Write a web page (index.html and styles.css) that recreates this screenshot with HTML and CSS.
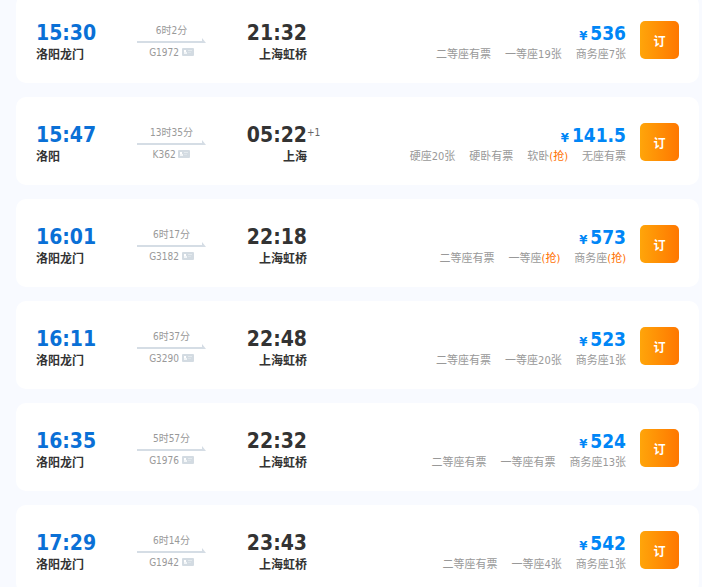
FILE: index.html
```
<!DOCTYPE html>
<html lang="zh-CN">
<head>
  <meta charset="UTF-8" />
  <title>洛阳 - 上海 火车票</title>
  <meta name="viewport" content="width=device-width, initial-scale=1.0" />
  <link rel="stylesheet" href="styles.css">
</head>
<body>

<!-- ID card icon and arrow, shared by all rows -->
<svg class="sprite" width="0" height="0" aria-hidden="true">
  <symbol id="id-card" viewBox="0 0 12 8">
    <rect width="12" height="8" rx="1" fill="#d3dbe2" />
    <rect x="2" y="2" width="2" height="2" fill="#fff" />
    <rect x="2" y="4" width="3" height="2" fill="#f3f6f8" />
    <rect x="6" y="2" width="4" height="1" fill="#e4eaee" />
    <rect x="6" y="4" width="3" height="1" fill="#dde4e9" />
  </symbol>
  <symbol id="arrow" viewBox="0 0 69 5">
    <path d="M0 3H65V0L69 5H0Z" fill="#d5dde5" />
  </symbol>
</svg>

<div class="train-list">
  <div class="train">
    <div class="from">
      <div class="time">15:30</div>
      <div class="station">洛阳龙门</div>
    </div>
    <div class="route">
      <div class="duration">6时2分</div>
      <svg class="arrow"><use href="#arrow" /></svg>
      <div class="number">G1972 <svg class="card-icon"><use href="#id-card" /></svg></div>
    </div>
    <div class="to">
      <div class="time">21:32</div>
      <div class="station">上海虹桥</div>
    </div>
    <div class="info">
      <div class="price"><span class="yen">¥</span>536</div>
      <div class="seats"><span>二等座有票</span><span>一等座19张</span><span>商务座7张</span></div>
    </div>
    <button class="book">订</button>
  </div>

  <div class="train">
    <div class="from">
      <div class="time">15:47</div>
      <div class="station">洛阳</div>
    </div>
    <div class="route">
      <div class="duration">13时35分</div>
      <svg class="arrow"><use href="#arrow" /></svg>
      <div class="number">K362 <svg class="card-icon"><use href="#id-card" /></svg></div>
    </div>
    <div class="to">
      <div class="time">05:22<span class="next-day">+1</span></div>
      <div class="station">上海</div>
    </div>
    <div class="info">
      <div class="price"><span class="yen">¥</span>141.5</div>
      <div class="seats"><span>硬座20张</span><span>硬卧有票</span><span>软卧<em>(抢)</em></span><span>无座有票</span></div>
    </div>
    <button class="book">订</button>
  </div>

  <div class="train">
    <div class="from">
      <div class="time">16:01</div>
      <div class="station">洛阳龙门</div>
    </div>
    <div class="route">
      <div class="duration">6时17分</div>
      <svg class="arrow"><use href="#arrow" /></svg>
      <div class="number">G3182 <svg class="card-icon"><use href="#id-card" /></svg></div>
    </div>
    <div class="to">
      <div class="time">22:18</div>
      <div class="station">上海虹桥</div>
    </div>
    <div class="info">
      <div class="price"><span class="yen">¥</span>573</div>
      <div class="seats"><span>二等座有票</span><span>一等座<em>(抢)</em></span><span>商务座<em>(抢)</em></span></div>
    </div>
    <button class="book">订</button>
  </div>

  <div class="train">
    <div class="from">
      <div class="time">16:11</div>
      <div class="station">洛阳龙门</div>
    </div>
    <div class="route">
      <div class="duration">6时37分</div>
      <svg class="arrow"><use href="#arrow" /></svg>
      <div class="number">G3290 <svg class="card-icon"><use href="#id-card" /></svg></div>
    </div>
    <div class="to">
      <div class="time">22:48</div>
      <div class="station">上海虹桥</div>
    </div>
    <div class="info">
      <div class="price"><span class="yen">¥</span>523</div>
      <div class="seats"><span>二等座有票</span><span>一等座20张</span><span>商务座1张</span></div>
    </div>
    <button class="book">订</button>
  </div>

  <div class="train">
    <div class="from">
      <div class="time">16:35</div>
      <div class="station">洛阳龙门</div>
    </div>
    <div class="route">
      <div class="duration">5时57分</div>
      <svg class="arrow"><use href="#arrow" /></svg>
      <div class="number">G1976 <svg class="card-icon"><use href="#id-card" /></svg></div>
    </div>
    <div class="to">
      <div class="time">22:32</div>
      <div class="station">上海虹桥</div>
    </div>
    <div class="info">
      <div class="price"><span class="yen">¥</span>524</div>
      <div class="seats"><span>二等座有票</span><span>一等座有票</span><span>商务座13张</span></div>
    </div>
    <button class="book">订</button>
  </div>

  <div class="train">
    <div class="from">
      <div class="time">17:29</div>
      <div class="station">洛阳龙门</div>
    </div>
    <div class="route">
      <div class="duration">6时14分</div>
      <svg class="arrow"><use href="#arrow" /></svg>
      <div class="number">G1942 <svg class="card-icon"><use href="#id-card" /></svg></div>
    </div>
    <div class="to">
      <div class="time">23:43</div>
      <div class="station">上海虹桥</div>
    </div>
    <div class="info">
      <div class="price"><span class="yen">¥</span>542</div>
      <div class="seats"><span>二等座有票</span><span>一等座4张</span><span>商务座1张</span></div>
    </div>
    <button class="book">订</button>
  </div>
</div>

</body>
</html>
```
FILE: styles.css
```
* {
  box-sizing: border-box;
}

body {
  margin: 0;
  background: #f8faff;
  color: #333;
  font-family: 'DejaVu Sans Condensed', 'Noto Sans CJK SC', sans-serif;
}

.sprite {
  position: absolute;
}

.train-list {
  display: flex;
  flex-direction: column;
  gap: 14px;
  margin: -5px 3px 0 16px;
}

.train {
  display: flex;
  align-items: flex-start;
  padding: 26px 20px 18px;
  background: #fff;
  border-radius: 10px;
}

.time {
  position: relative;
  height: 24px;
  font-size: 21px;
  font-weight: bold;
  line-height: 24px;
}

.station {
  height: 20px;
  font-size: 12px;
  font-weight: bold;
  line-height: 20px;
}

.from {
  width: 101px;
}

.from .time {
  color: #0a70d6;
}

.route {
  width: 69px;
  color: #999;
  font-size: 10px;
  text-align: center;
}

.duration,
.number {
  height: 17px;
  line-height: 20px;
}

.arrow {
  display: block;
  width: 69px;
  height: 5px;
}

.card-icon {
  width: 12px;
  height: 8px;
}

.to {
  width: 101px;
  text-align: right;
}

.next-day {
  position: absolute;
  left: 100%;
  top: 0;
  color: #666;
  font-size: 10px;
  font-weight: normal;
  line-height: 20px;
}

.info {
  flex: 1;
  margin-right: 14px;
  text-align: right;
}

.price {
  height: 24px;
  color: #0086f6;
  font-size: 19px;
  font-weight: bold;
  line-height: 24px;
}

.yen {
  margin-right: 3px;
  font-size: 13px;
}

.seats {
  display: flex;
  justify-content: flex-end;
  gap: 14px;
  height: 20px;
  color: #999;
  font-size: 11px;
  line-height: 20px;
}

.seats em {
  color: #ff6f00;
  font-style: normal;
}

.book {
  width: 39px;
  height: 38px;
  padding: 0;
  border: none;
  border-radius: 5px;
  background: linear-gradient(90deg, #ffa50a, #ff7700);
  color: #fff;
  font-family: inherit;
  font-size: 12px;
  font-weight: bold;
  cursor: pointer;
}
```
